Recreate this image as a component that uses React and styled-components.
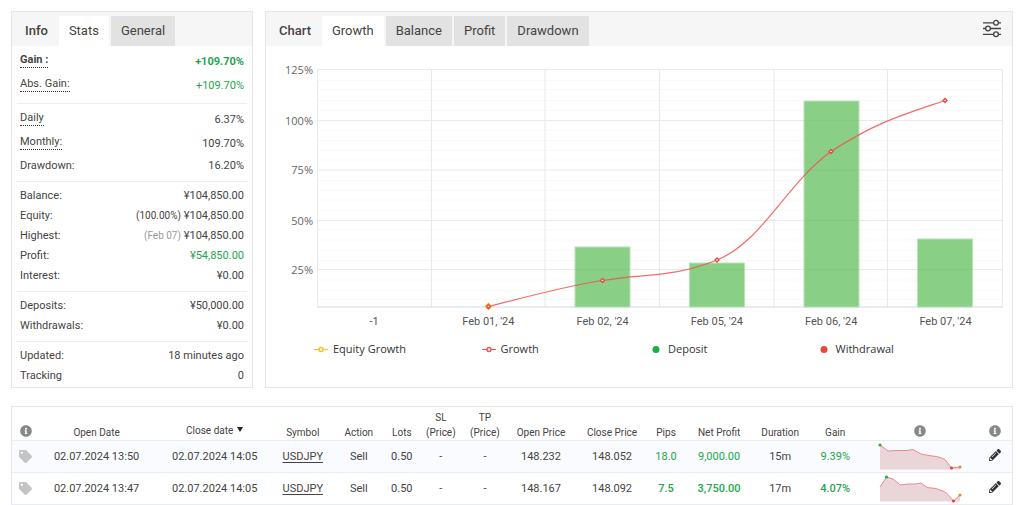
import React, { useState } from 'react';
import styled, { createGlobalStyle } from 'styled-components';
import { FaInfoCircle, FaTag, FaPencilAlt } from 'react-icons/fa';

const GlobalStyle = createGlobalStyle`
    * {
        box-sizing: border-box;
    }
    body {
        margin: 0;
        background: #fff;
        color: #444;
        font-family: Roboto, "Liberation Sans", sans-serif;
        font-size: 11px;
    }
    button {
        font-family: inherit;
        border: 0;
        cursor: pointer;
    }
`

const Page = styled.main`
    padding: 11px 11px 0;
`
const TopRow = styled.div`
    display: grid;
    grid-template-columns: 242px minmax(0, 1fr);
    gap: 12px;
    margin-bottom: 18px;
`
const Panel = styled.section`
    border: 1px solid #e6e6e6;
    background: #fff;
`
const PanelHeader = styled.header`
    display: flex;
    align-items: flex-end;
    height: 34px;
    padding-right: 10px;
    background: #f6f6f6;
`
const PanelTitle = styled.h2`
    margin: 0;
    padding: 0 11px 0 13px;
    font-size: 13px;
    font-weight: 500;
    line-height: 30px;
`
const Tabs = styled.div`
    display: flex;
    flex: 1;
    gap: 2px;
`
const Tab = styled.button`
    height: 30px;
    padding: 0 10px;
    font-size: 13px;
    line-height: 28px;
    color: #444;
    background: ${props => props.$active ? '#fff' : '#e2e2e2'};
`
const IconButton = styled.button`
    display: inline-flex;
    padding: 0;
    background: none;
    color: #333;
`
const SettingsButton = styled(IconButton)`
    align-self: center;
`

const Group = styled.dl`
    margin: 0 5px;
    padding: 4px 3px 5px;
    border-bottom: 1px solid #eee;
    &:last-child {
        border-bottom: 0;
        padding-bottom: 1px;
    }
`
const StatRow = styled.div`
    display: flex;
    align-items: flex-start;
    justify-content: space-between;
    height: ${props => props.$tall ? '24px' : '20px'};
    line-height: ${props => props.$tall ? '24px' : '20px'};
    font-weight: ${props => props.$bold ? 700 : 400};
`
const StatLabel = styled.dt`
    ${props => props.$hint && `
        margin-top: 3px;
        line-height: 14px;
        border-bottom: 1px dotted #333;
    `}
`
const StatValue = styled.dd`
    margin: 0;
    color: ${props => props.$green ? '#22a84b' : 'inherit'};
`
const Note = styled.span`
    font-size: 10px;
    color: ${props => props.$muted ? '#999' : 'inherit'};
`

const ChartSvg = styled.svg`
    display: block;
    width: 100%;
    height: auto;
`
const Legend = styled.ul`
    display: grid;
    grid-template-columns: repeat(4, 1fr);
    margin: 0;
    padding: 10px 28px 0 48px;
    list-style: none;
`
const LegendItem = styled.li`
    display: flex;
    align-items: center;
    gap: 5px;
    font-family: "Open Sans", sans-serif;
    font-size: 11px;
    line-height: 16px;
    color: #333;
`

const Trades = styled.table`
    width: 100%;
    table-layout: fixed;
    border-collapse: collapse;
    border: 1px solid #e6e6e6;
    text-align: center;
`
const Th = styled.th`
    height: 34px;
    padding: 3px 0 0;
    vertical-align: bottom;
    font-size: 10px;
    font-weight: 400;
    line-height: 15px;
    border-bottom: 1px solid #e9edf1;
    svg {
        display: block;
        margin: 0 auto 3px;
        color: #888;
    }
`
const SortButton = styled.button`
    padding: 0 0 2px;
    background: none;
    font-size: 10px;
    line-height: 15px;
    color: inherit;
    white-space: nowrap;
`
const Arrow = styled.span`
    display: inline-block;
    margin-left: 4px;
    vertical-align: 2px;
    border: 3px solid transparent;
    border-top: 5px solid #222;
    border-bottom: 0;
`
const Tr = styled.tr`
    background: ${props => props.$shaded ? '#f9fbfe' : '#fff'};
    border-bottom: 1px solid #e9edf1;
`
const Td = styled.td`
    height: 32px;
    padding: 0;
    white-space: nowrap;
    color: ${props => props.$green ? '#22a84b' : 'inherit'};
    font-weight: ${props => props.$strong ? 500 : 400};
    svg {
        display: block;
        margin: 0 auto;
    }
`
const Symbol = styled.a`
    color: inherit;
    text-decoration: underline;
    text-underline-offset: 2px;
`

const stats = [
    [
        { label: 'Gain :', value: '+109.70%', hint: true, tall: true, green: true, bold: true },
        { label: 'Abs. Gain:', value: '+109.70%', hint: true, tall: true, green: true },
    ],
    [
        { label: 'Daily', value: '6.37%', hint: true, tall: true },
        { label: 'Monthly:', value: '109.70%', hint: true, tall: true },
        { label: 'Drawdown:', value: '16.20%' },
    ],
    [
        { label: 'Balance:', value: '¥104,850.00' },
        { label: 'Equity:', value: '¥104,850.00', note: '(100.00%)' },
        { label: 'Highest:', value: '¥104,850.00', note: '(Feb 07)', muted: true },
        { label: 'Profit:', value: '¥54,850.00', green: true },
        { label: 'Interest:', value: '¥0.00' },
    ],
    [
        { label: 'Deposits:', value: '¥50,000.00' },
        { label: 'Withdrawals:', value: '¥0.00' },
    ],
    [
        { label: 'Updated:', value: '18 minutes ago' },
        { label: 'Tracking', value: '0' },
    ],
]

const columns = [28, 114, 122, 54, 58, 28, 50, 38, 74, 68, 40, 66, 56, 54, 116, 34]

const trades = [
    {
        open: '02.07.2024 13:50', close: '02.07.2024 14:05', openPrice: '148.232', closePrice: '148.052',
        pips: '18.0', profit: '9,000.00', duration: '15m', gain: '9.39%',
        line: [[2, 3], [10, 9], [19, 8.5], [29, 8.5], [35, 7.5], [43, 12], [51, 13.5], [61, 15], [67, 17.5], [73.5, 26], [82, 25]],
        high: 0, low: 9,
    },
    {
        open: '02.07.2024 13:47', close: '02.07.2024 14:05', openPrice: '148.167', closePrice: '148.092',
        pips: '7.5', profit: '3,750.00', duration: '17m', gain: '4.07%',
        line: [[2, 13], [8.5, 3], [15, 5], [22.5, 11], [30, 10], [37, 10], [43, 9], [49, 13.5], [58, 14.5], [65, 17], [69, 19.5], [75.5, 27], [82, 21]],
        high: 1, low: 11,
    },
]

const gridY = [
    { y: 23.5, label: '125%' },
    { y: 74.5, label: '100%' },
    { y: 124, label: '75%' },
    { y: 174.5, label: '50%' },
    { y: 223.5, label: '25%' },
]
const gridX = [51.5, 165.5, 279, 393.5, 508, 621.5, 736.5]
const minorY = [34.5, 43.5, 54.5, 64.5, 84, 94.5, 104.5, 114, 134.5, 144.5, 154, 164, 183.5, 194, 204, 214.5, 234, 244.5, 253.5]
const days = ['-1', "Feb 01, '24", "Feb 02, '24", "Feb 05, '24", "Feb 06, '24", "Feb 07, '24"]
const bars = [{ x: 309, y: 201 }, { x: 423.5, y: 217 }, { x: 538, y: 55 }, { x: 651.5, y: 193 }]
const points = [[222.5, 260.5], [336.5, 234.5], [451, 214], [565, 105.5], [679, 54.5]]

const Diamond = ({ x, y, color, size = 2.4 }) => (
    <path
        d={`M${x} ${y - size} L${x + size} ${y} L${x} ${y + size} L${x - size} ${y} Z`}
        fill="#fff"
        stroke={color}
        strokeWidth="1.4"
    />
)

const GrowthChart = () => (
    <ChartSvg viewBox="0 0 746 285" role="img" aria-label="Growth">
        {minorY.map(y => <line key={y} x1="51" x2="737" y1={y} y2={y} stroke="#f8f8f8" />)}
        {gridY.map(g => <line key={g.label} x1="51" x2="737" y1={g.y} y2={g.y} stroke="#e9e9e9" />)}
        {gridX.map(x => <line key={x} x1={x} x2={x} y1="23" y2="261" stroke="#e9e9e9" />)}
        <line x1="51" x2="737" y1="261" y2="261" stroke="#dfe6f2" strokeWidth="1.5" />
        {bars.map(b => (
            <rect
                key={b.x}
                x={b.x}
                y={b.y}
                width="55"
                height={261 - b.y}
                fill="#5cbd58"
                fillOpacity="0.72"
                stroke="#b9e2b7"
            />
        ))}
        <path
            d="M222.5 260.5 C260 251 300 240 336.5 234.5 C382 227 406 232 451 214 C496 196 520 138 565 105.5 C611 76 633 70 679 54.5"
            fill="none"
            stroke="#f0524c"
            strokeOpacity="0.85"
            strokeWidth="1.2"
        />
        <Diamond x={222.5} y={260.5} color="#f9b91c" size={3} />
        {points.map(([x, y]) => <Diamond key={x} x={x} y={y} color="#ef4b45" size={2} />)}
        {gridY.map(g => (
            <text key={g.label} x="47" y={g.y + 4} textAnchor="end" fontFamily="Open Sans" fontSize="11" fill="#666">
                {g.label}
            </text>
        ))}
        {days.map((day, i) => (
            <text key={day} x={108 + i * 114.3} y="279" textAnchor="middle" fontFamily="Roboto" fontSize="11" fill="#555">
                {day}
            </text>
        ))}
    </ChartSvg>
)

const LineMarker = ({ color }) => (
    <svg width="14" height="8" viewBox="0 0 14 8">
        <line x1="0" x2="14" y1="4.5" y2="4.5" stroke={color} />
        <circle cx="7" cy="4.5" r="2" fill="#fff" stroke={color} strokeWidth="1.4" />
    </svg>
)

const DotMarker = ({ color }) => (
    <svg width="14" height="8" viewBox="0 0 14 8">
        <circle cx="7" cy="4.5" r="3.5" fill={color} />
    </svg>
)

const SlidersIcon = () => (
    <svg width="20" height="20" viewBox="0 0 20 20" fill="#f6f6f6" stroke="#444" strokeWidth="1.3">
        <path d="M1 3.8H19M1 9.5H19M1 15.3H19" />
        <circle cx="14" cy="3.8" r="2.4" />
        <circle cx="6" cy="9.5" r="2.4" />
        <circle cx="14" cy="15.3" r="2.4" />
    </svg>
)

const Sparkline = ({ line, high, low }) => {
    const path = line.map(p => p.join(' ')).join(' L')
    const last = line[line.length - 1]
    return (
        <svg width="84" height="29" viewBox="0 0 84 29">
            <path d={`M2 27.5 L${path} V27.5 Z`} fill="#ead5d8" />
            <path d={`M${path}`} fill="none" stroke="#f08a8a" />
            <circle cx={line[high][0]} cy={line[high][1]} r="1.6" fill="#1fb141" />
            <circle cx={line[low][0]} cy={line[low][1]} r="1.6" fill="#f0403c" />
            <circle cx={last[0]} cy={last[1]} r="1.6" fill="#e58b2b" />
        </svg>
    )
}

const TabBar = ({ tabs }) => {
    const [active, setActive] = useState(tabs[0])
    return (
        <Tabs role="tablist">
            {tabs.map(tab => (
                <Tab key={tab} role="tab" aria-selected={tab === active} $active={tab === active} onClick={() => setActive(tab)}>
                    {tab}
                </Tab>
            ))}
        </Tabs>
    )
}

const App = () => {
    return (
        <>
            <GlobalStyle />
            <Page>
                <TopRow>
                    <Panel>
                        <PanelHeader>
                            <PanelTitle>Info</PanelTitle>
                            <TabBar tabs={['Stats', 'General']} />
                        </PanelHeader>
                        {stats.map((rows, i) => (
                            <Group key={i}>
                                {rows.map(row => (
                                    <StatRow key={row.label} $tall={row.tall} $bold={row.bold}>
                                        <StatLabel $hint={row.hint}>{row.label}</StatLabel>
                                        <StatValue $green={row.green}>
                                            {row.note && <><Note $muted={row.muted}>{row.note}</Note>{' '}</>}
                                            {row.value}
                                        </StatValue>
                                    </StatRow>
                                ))}
                            </Group>
                        ))}
                    </Panel>
                    <Panel>
                        <PanelHeader>
                            <PanelTitle>Chart</PanelTitle>
                            <TabBar tabs={['Growth', 'Balance', 'Profit', 'Drawdown']} />
                            <SettingsButton aria-label="Chart settings"><SlidersIcon /></SettingsButton>
                        </PanelHeader>
                        <GrowthChart />
                        <Legend>
                            <LegendItem><LineMarker color="#f9c01c" />Equity Growth</LegendItem>
                            <LegendItem><LineMarker color="#ef5350" />Growth</LegendItem>
                            <LegendItem><DotMarker color="#1bb142" />Deposit</LegendItem>
                            <LegendItem><DotMarker color="#f0443e" />Withdrawal</LegendItem>
                        </Legend>
                    </Panel>
                </TopRow>
                <Trades>
                    <colgroup>
                        {columns.map((width, i) => <col key={i} width={width} />)}
                    </colgroup>
                    <thead>
                        <tr>
                            <Th aria-label="Tags"><FaInfoCircle size={12} /></Th>
                            <Th>Open Date</Th>
                            <Th><SortButton>Close date<Arrow /></SortButton></Th>
                            <Th>Symbol</Th>
                            <Th>Action</Th>
                            <Th>Lots</Th>
                            <Th>SL<br />(Price)</Th>
                            <Th>TP<br />(Price)</Th>
                            <Th>Open Price</Th>
                            <Th>Close Price</Th>
                            <Th>Pips</Th>
                            <Th>Net Profit</Th>
                            <Th>Duration</Th>
                            <Th>Gain</Th>
                            <Th aria-label="Trend"><FaInfoCircle size={12} /></Th>
                            <Th aria-label="Notes"><FaInfoCircle size={12} /></Th>
                        </tr>
                    </thead>
                    <tbody>
                        {trades.map((trade, i) => (
                            <Tr key={trade.open} $shaded={i === 0}>
                                <Td><FaTag size={13} color="#c4c4c4" /></Td>
                                <Td>{trade.open}</Td>
                                <Td>{trade.close}</Td>
                                <Td><Symbol href="#usdjpy">USDJPY</Symbol></Td>
                                <Td>Sell</Td>
                                <Td>0.50</Td>
                                <Td>-</Td>
                                <Td>-</Td>
                                <Td>{trade.openPrice}</Td>
                                <Td>{trade.closePrice}</Td>
                                <Td $green $strong={i === 1}>{trade.pips}</Td>
                                <Td $green $strong={i === 1}>{trade.profit}</Td>
                                <Td>{trade.duration}</Td>
                                <Td $green $strong={i === 1}>{trade.gain}</Td>
                                <Td><Sparkline line={trade.line} high={trade.high} low={trade.low} /></Td>
                                <Td><IconButton aria-label="Edit note"><FaPencilAlt size={12} /></IconButton></Td>
                            </Tr>
                        ))}
                    </tbody>
                </Trades>
            </Page>
        </>
    )
}

export default App
